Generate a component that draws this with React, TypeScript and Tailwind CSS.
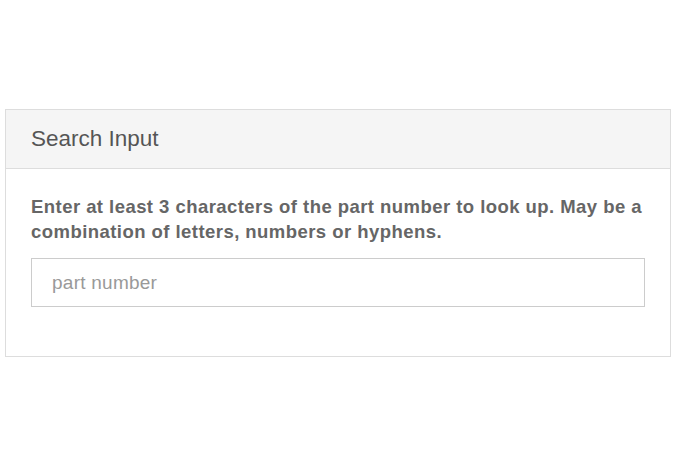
import React from "react";

export default function App() {
  return (
    <div className="min-h-[469px] w-[700px] bg-white pt-[109px] pl-[5px]" style={{ fontFamily: '"Liberation Sans", Arial, sans-serif' }}>
      <div className="w-[666px] border border-[#dddddd] bg-white">
        <div className="flex h-[59px] items-center border-b border-[#dddddd] bg-[#f5f5f5] pl-[25px] text-[22.5px] text-[#555555]">
          Search Input
        </div>
        <div className="px-[25px] pt-[25px] pb-[49px]">
          <p className="text-[18.5px] font-bold leading-[25px] tracking-[0.45px] text-[#666666]">
            Enter at least 3 characters of the part number to look up. May be a combination of letters, numbers or hyphens.
          </p>
          <input
            type="text"
            placeholder="part number"
            className="mt-[14px] block h-[49px] w-[614px] border border-[#cccccc] bg-white px-[20px] text-[19px] tracking-[0.25px] text-[#555555] outline-none placeholder:text-[#999999]"
          />
        </div>
      </div>
    </div>
  );
}
